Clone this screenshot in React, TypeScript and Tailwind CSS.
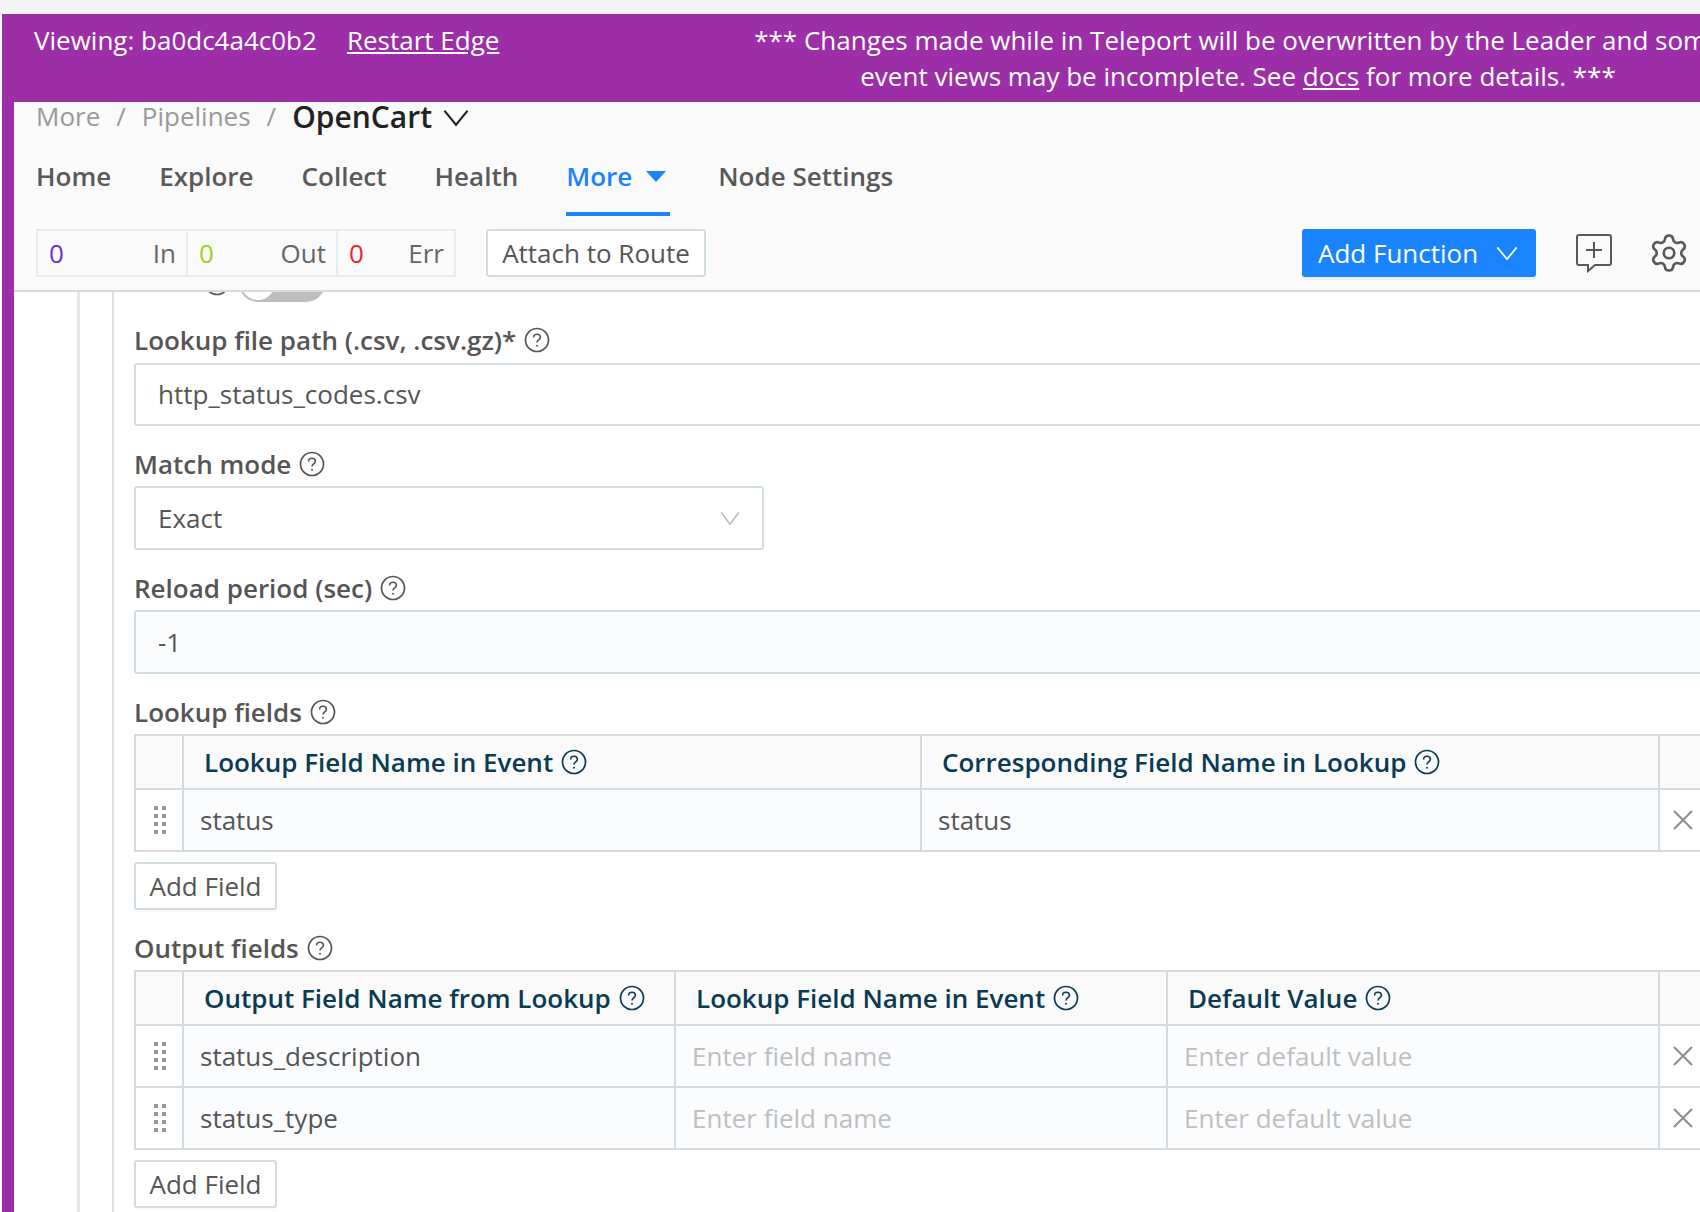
import { FC, ReactNode } from "react";
import { Settings } from "lucide-react";

const Help: FC<{ className?: string }> = ({ className = "text-[#555]" }) => (
  <svg viewBox="0 0 26 26" className={`w-[26px] h-[26px] shrink-0 ${className}`} fill="none" stroke="currentColor">
    <circle cx="13" cy="13" r="11.5" strokeWidth="1.7" />
    <path d="M9.6 10.4c0-2 1.5-3.2 3.4-3.2s3.4 1.2 3.4 3c0 2.6-3.4 2.6-3.4 5.2" strokeWidth="1.6" />
    <circle cx="13" cy="18.7" r="1" fill="currentColor" stroke="none" />
  </svg>
);

const Chevron: FC<{ className: string }> = ({ className }) => (
  <svg viewBox="0 0 26 16" preserveAspectRatio="none" className={className} fill="none" stroke="currentColor" strokeWidth="2">
    <path d="M1.5 1.5 13 14 24.5 1.5" />
  </svg>
);

const Grip = () => (
  <svg viewBox="0 0 12 28" className="w-3 h-7 fill-[#999]">
    <rect x="0" y="0" width="4" height="4" />
    <rect x="8" y="0" width="4" height="4" />
    <rect x="0" y="8" width="4" height="4" />
    <rect x="8" y="8" width="4" height="4" />
    <rect x="0" y="16" width="4" height="4" />
    <rect x="8" y="16" width="4" height="4" />
    <rect x="0" y="24" width="4" height="4" />
    <rect x="8" y="24" width="4" height="4" />
  </svg>
);

const Cross = () => (
  <svg viewBox="0 0 20 20" className="w-5 h-5" fill="none" stroke="#8c8c8c" strokeWidth="2">
    <path d="M1 1 19 19M19 1 1 19" />
  </svg>
);

const Label: FC<{ children: ReactNode; className?: string }> = ({ children, className = "" }) => (
  <div className={`flex items-center gap-[8px] h-[26px] font-semibold text-[#555] ${className}`}>
    <span>{children}</span>
    <Help />
  </div>
);

const AddField = () => (
  <button className="w-[143px] h-[48px] mt-[10px] block bg-white text-[#555] border-2 border-[#d0dde4] rounded-[3px] shadow-[0_2px_0_rgba(0,0,0,0.02)]">
    Add Field
  </button>
);

const HeadCell: FC<{ title?: string }> = ({ title }) => (
  <div className="h-[54px] bg-[#fafafa] border-t-2 border-r-2 border-[#d9d9d9] flex items-center pl-[20px] gap-[8px] font-semibold text-[#0b3a53]">
    {title && (
      <>
        <span className="whitespace-nowrap">{title}</span>
        <Help className="text-[#0b3a53]" />
      </>
    )}
  </div>
);

const BodyCell: FC<{ value?: string; placeholder?: string }> = ({ value, placeholder }) => (
  <div className={`h-[62px] bg-[#fbfcfe] border-t-2 border-r-2 border-[#d0dde4] flex items-center pl-[16px] ${value ? "text-[#555]" : "text-[#bfbfbf]"}`}>
    {value || placeholder}
  </div>
);

const GripCell = () => (
  <div className="h-[62px] bg-white border-t-2 border-r-2 border-t-[#d9d9d9] border-r-[#d0dde4] flex items-center justify-center pl-[2px]">
    <Grip />
  </div>
);

const CrossCell = () => (
  <div className="h-[62px] bg-white border-t-2 border-[#d9d9d9] flex items-center justify-center">
    <Cross />
  </div>
);

const Stat: FC<{ value: string; label: string; color: string; width: string }> = ({ value, label, color, width }) => (
  <div className={`flex justify-between items-center h-full pl-[11px] pr-[10px] border-r-2 border-[#e6ebee] last:border-r-0 ${width}`}>
    <span className={color}>{value}</span>
    <span className="text-[#666]">{label}</span>
  </div>
);

const App = () => {
  return (
    <div className="w-[1700px] h-[1212px] overflow-hidden bg-white text-[26px] font-['Open_Sans',sans-serif]">
      <div className="h-[14px] bg-[#f5f5f5]" />
      <div className="ml-[2px] h-[1198px] bg-[#9c2fa8] flex flex-col">
        {/* Teleport banner */}
        <div className="h-[88px] shrink-0 flex text-white leading-[36px] pt-[8px]">
          <span className="ml-[32px] whitespace-nowrap">Viewing: ba0dc4a4c0b2</span>
          <a className="ml-[30px] underline whitespace-nowrap">Restart Edge</a>
          <div className="ml-auto mr-[-22px] w-[968px] shrink-0 text-center whitespace-nowrap">
            *** Changes made while in Teleport will be overwritten by the Leader and some
            <br />
            event views may be incomplete. See <a className="underline">docs</a> for more details. ***
          </div>
        </div>

        <div className="ml-[12px] flex-1 min-h-0 bg-white flex flex-col">
          {/* Pipeline header */}
          <div className="h-[190px] shrink-0 bg-[#fafafa] border-b-2 border-[#d0dde4] pl-[22px] pr-[10px]">
            <div className="h-[29px] flex items-center text-[#999]">
              <span>More</span>
              <span className="ml-[16px]">/</span>
              <span className="ml-[16px]">Pipelines</span>
              <span className="ml-[16px]">/</span>
              <span className="ml-[16px] text-[30px] font-semibold text-[#222]">OpenCart</span>
              <Chevron className="ml-[11px] mt-[2px] w-[26px] h-[18px] text-[#222]" />
            </div>
            <div className="h-[98px] flex items-start pt-[26px] font-semibold text-[#595959] relative">
              <span>Home</span>
              <span className="ml-[48px]">Explore</span>
              <span className="ml-[48px]">Collect</span>
              <span className="ml-[48px]">Health</span>
              <div className="ml-[48px] w-[104px] h-[59px] border-b-4 border-[#1a84ff] text-[#1a84ff] flex items-start gap-[14px]">
                <span>More</span>
                <span className="mt-[14px] border-x-[10px] border-t-[11px] border-x-transparent border-t-[#1a84ff]" />
              </div>
              <span className="ml-[48px]">Node Settings</span>
            </div>
            <div className="h-[48px] flex items-center">
              <div className="flex items-center w-[420px] h-full border-2 border-[#e6ebee]">
                <Stat value="0" label="In" color="text-[#6a2fd6]" width="w-[150px]" />
                <Stat value="0" label="Out" color="text-[#9ad21a]" width="w-[150px]" />
                <Stat value="0" label="Err" color="text-[#f5222d]" width="flex-1" />
              </div>
              <button className="ml-[30px] w-[220px] h-full bg-white text-[#555] border-2 border-[#d0dde4] rounded-[3px]">
                Attach to Route
              </button>
              <button className="ml-auto w-[234px] h-full bg-[#1a84ff] text-white rounded-[3px] shadow-[0_3px_0_rgba(0,0,0,0.04)] flex items-center pl-[16px] gap-[18px]">
                <span>Add Function</span>
                <Chevron className="w-[22px] h-[15px]" />
              </button>
              <svg viewBox="0 0 36 40" className="ml-[40px] w-[36px] h-[40px]" fill="none" stroke="#595959" strokeWidth="2">
                <path d="M3 2h30a2 2 0 0 1 2 2v26a2 2 0 0 1-2 2H19l-7 6v-6H3a2 2 0 0 1-2-2V4a2 2 0 0 1 2-2Z" />
                <path d="M18 9v16M10 17h16" />
              </svg>
              <Settings className="ml-[36px] w-[42px] h-[42px] text-[#595959]" strokeWidth={1.5} />
            </div>
          </div>

          {/* Function form */}
          <div className="flex-1 min-h-0 overflow-hidden ml-[63px] border-l-[3px] border-[#e8e8e8] pl-[32px]">
            <div className="h-full border-l-2 border-[#e0e0e0] pl-[20px] w-[1640px]">
              <div className="h-[10px] overflow-hidden relative mb-[25px]">
                <div className="absolute left-[70px] -top-[22px] text-[#555]">
                  <Help />
                </div>
                <div className="absolute left-[105px] -top-[28px] w-[86px] h-[38px] rounded-full bg-[#bdbdbd]">
                  <div className="absolute left-[2px] top-[2px] w-[34px] h-[34px] rounded-full bg-white" />
                </div>
              </div>

              <Label>Lookup file path (.csv, .csv.gz)*</Label>
              <div className="mt-[10px] h-[63px] bg-white border-2 border-[#d0dde4] rounded-[3px] flex items-center pl-[22px] text-[#555]">
                http_status_codes.csv
              </div>

              <Label className="mt-[25px]">Match mode</Label>
              <div className="mt-[9px] w-[630px] h-[64px] bg-white border-2 border-[#d0dde4] rounded-[3px] flex items-center justify-between pl-[22px] pr-[22px] text-[#555]">
                Exact
                <Chevron className="w-[20px] h-[15px] text-[#bfbfbf]" />
              </div>

              <Label className="mt-[25px]">Reload period (sec)</Label>
              <div className="mt-[9px] h-[64px] bg-[#fbfcfe] border-2 border-[#d0dde4] rounded-[3px] flex items-center pl-[22px] text-[#555]">
                -1
              </div>

              <Label className="mt-[25px]">Lookup fields</Label>
              <div className="mt-[9px] grid grid-cols-[48px_738px_738px_46px] border-l-2 border-b-2 border-[#d9d9d9]">
                <HeadCell />
                <HeadCell title="Lookup Field Name in Event" />
                <HeadCell title="Corresponding Field Name in Lookup" />
                <div className="bg-[#fafafa] border-t-2 border-[#d9d9d9]" />
                <GripCell />
                <BodyCell value="status" />
                <BodyCell value="status" />
                <CrossCell />
              </div>
              <AddField />

              <Label className="mt-[25px]">Output fields</Label>
              <div className="mt-[9px] grid grid-cols-[48px_492px_492px_492px_46px] border-l-2 border-b-2 border-[#d9d9d9]">
                <HeadCell />
                <HeadCell title="Output Field Name from Lookup" />
                <HeadCell title="Lookup Field Name in Event" />
                <HeadCell title="Default Value" />
                <div className="bg-[#fafafa] border-t-2 border-[#d9d9d9]" />
                <GripCell />
                <BodyCell value="status_description" />
                <BodyCell placeholder="Enter field name" />
                <BodyCell placeholder="Enter default value" />
                <CrossCell />
                <GripCell />
                <BodyCell value="status_type" />
                <BodyCell placeholder="Enter field name" />
                <BodyCell placeholder="Enter default value" />
                <CrossCell />
              </div>
              <AddField />
            </div>
          </div>
        </div>
      </div>
    </div>
  );
};

export default App;
